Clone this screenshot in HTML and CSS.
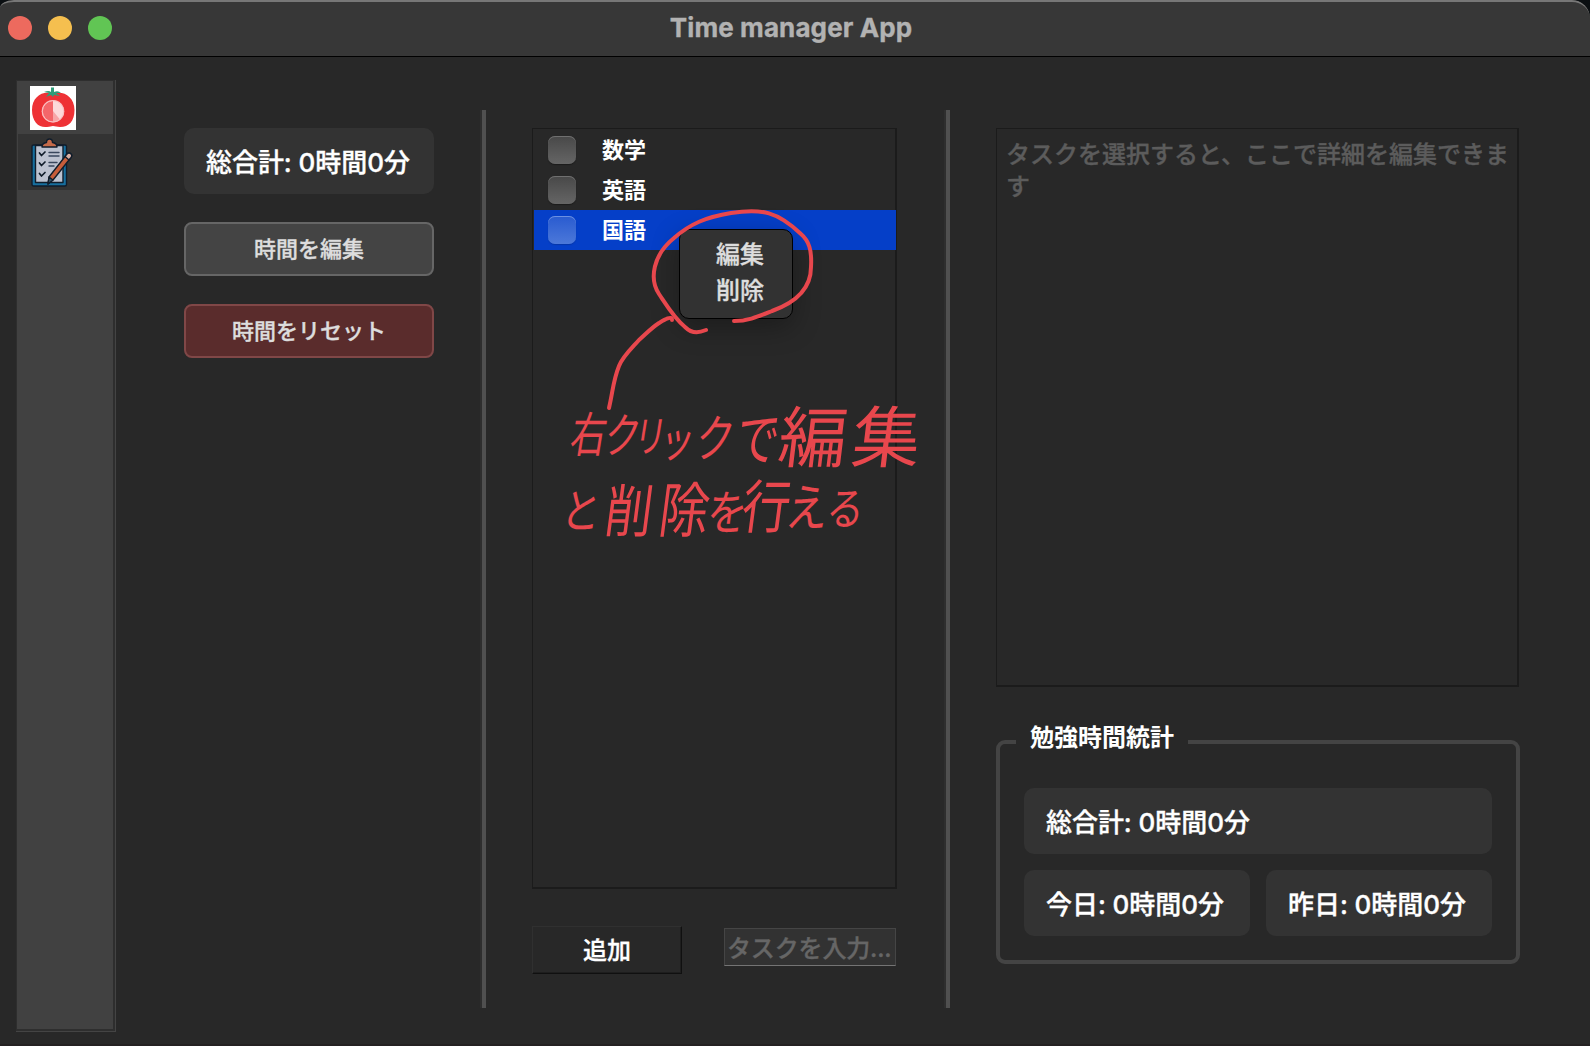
FILE: index.html
```html
<!DOCTYPE html>
<html lang="ja">
<head>
<meta charset="utf-8">
<title>Time manager App</title>
<link rel="stylesheet" href="styles.css">
</head>
<body>
<div class="window">
  <header class="titlebar">
    <div class="lights"><i class="light close"></i><i class="light minimize"></i><i class="light zoom"></i></div>
    <h1>Time manager App</h1>
  </header>
  <main class="content">
    <nav class="sidebar">
      <div class="tabs">
        <div class="tab">
          <svg class="tomato" width="46" height="44" viewBox="0 0 46 44">
            <rect width="46" height="44" fill="#fff"/>
            <path d="M23 8C14 4 2 10 2 24C2 36 9 42 17 41C20 41 21 40 23 40C25 40 27 41 30 41C39 41 44.500 35 44.500 24C44.500 10 32 4 23 8Z" fill="#ee3135"/>
            <path d="M14 6Q19 4 21 6V1.500H24V6Q28 4 31 7L26 7L30 10L24 9L23 11L21 9L16 11L19 7Z" fill="#2f9c78"/>
            <circle cx="23" cy="25.300" r="11.300" fill="#f8a5a7"/>
            <path d="M23 15A10.300 10.300 0 0 0 23 35.600Z" fill="#f4666a"/>
            <path d="M23 14.500A10.800 10.800 0 0 1 30 33.500L23 25Z" fill="#fcd9da"/>
            <circle cx="23" cy="25.300" r="10.700" fill="none" stroke="#fbc0c2" stroke-width="1"/>
          </svg>
        </div>
        <div class="tab tab-dark">
          <svg class="clipboard" width="42" height="50" viewBox="0 0 42 50">
            <g stroke="#111d2b" stroke-width="1.400" stroke-linejoin="round" stroke-linecap="round">
              <rect x="1" y="7" width="34.500" height="41" rx="1.500" fill="#176f9e"/>
              <path d="M4.500 7.500H32V44.500H4.500Z" fill="#bcc2d0"/>
              <path d="M11 9Q11 5 15.500 4.500Q15.500 1 18.500 1Q21.500 1 21.500 4.500Q26 5 26 9Z" fill="#c46a49"/>
              <path d="M8.500 15L10.500 17.500L14 14M8.500 25L10.500 27.500L14 24M8.500 35.500L10.500 38L14 34.500" fill="none" stroke-width="1.700"/>
              <path d="M18 14.500H28M18 18H28M18 24.500H26M18 28H23" fill="none" stroke="#39475d" stroke-width="1.400"/>
              <path d="M36 16Q38 14 40 16Q41.500 17.500 40 19.500L22 42L17 46L18 39Z" fill="#c65d3b"/>
              <path d="M36 16Q38 14 40 16Q41.500 17.500 40 19.500L38 22L34 18.500Z" fill="#dab0a4"/>
              <path d="M18 39L22 42L17 46Z" fill="#36556b"/>
            </g>
          </svg>
        </div>
      </div>
    </nav>

    <section class="timer">
      <div class="readout total">総合計: 0時間0分</div>
      <button class="btn">時間を編集</button>
      <button class="btn danger">時間をリセット</button>
    </section>

    <div class="splitter"></div>

    <section class="tasks">
      <ul class="list">
        <li><span class="check"></span>数学</li>
        <li><span class="check"></span>英語</li>
        <li class="selected"><span class="check"></span>国語</li>
      </ul>
      <div class="entry">
        <button class="add">追加</button>
        <div class="field">タスクを入力...</div>
      </div>
    </section>

    <div class="splitter"></div>

    <section class="details">
      <div class="editor">タスクを選択すると、ここで詳細を編集できます</div>
      <fieldset class="stats">
        <legend>勉強時間統計</legend>
        <div class="readout wide">総合計: 0時間0分</div>
        <div class="readout">今日: 0時間0分</div>
        <div class="readout">昨日: 0時間0分</div>
      </fieldset>
    </section>
  </main>

  <div class="menu"><div>編集</div><div>削除</div></div>

  <svg class="annotation" width="1590" height="1046" viewBox="0 0 1590 1046">
    <g class="pen">
      <path d="M734 321C748 321 757 317 772 311C797 302 811 288 811 267C812 250 809 241 801 234C778 212 762 208 731 213C706 217 690 224 674 238C653 255 649 279 659 294C667 306 674 318 685 327C693 335 701 332 706 330"/>
      <path d="M672 320C672 315 664 320 659 323C650 329 646 334 639 340C632 348 623 356 619 366C613 381 613 391 609 408"/>
    </g>
    <g class="note">
      <text transform="matrix(.74 0 -.16 1 0 453)" x="768 814 854 890 938 992" y="-1 0 -1 4 4 7"><tspan font-size="48">右</tspan><tspan font-size="48">ク</tspan><tspan font-size="43">リ</tspan><tspan font-size="46">ッ</tspan><tspan font-size="51">ク</tspan><tspan font-size="58">で</tspan></text>
      <text transform="matrix(1.02 0 -.12 1 0 462)" x="761 833" y="0 0" font-size="67">編集</text>
      <text transform="matrix(.83 0 -.13 1 0 529)" x="674 727 792 850 891 944 993" y="-1 3 3 1 -1 -3 -4"><tspan font-size="47">と</tspan><tspan font-size="57">削</tspan><tspan font-size="60">除</tspan><tspan font-size="48">を</tspan><tspan font-size="58">行</tspan><tspan font-size="51">え</tspan><tspan font-size="45">る</tspan></text>
    </g>
  </svg>
</div>
</body>
</html>
```
FILE: styles.css
```css
* { box-sizing: border-box; }

body {
  margin: 0;
  width: 1590px;
  height: 1046px;
  overflow: hidden;
  background: #0b0f12;
  color: #fff;
  font-family: Inter, "Noto Sans CJK JP", sans-serif;
  font-weight: 500;
  -webkit-text-stroke: .35px currentColor;
}

.window {
  position: relative;
  display: flex;
  flex-direction: column;
  height: 1046px;
  background: #282828;
  border-bottom: 2px solid #242122;
  border-radius: 14px 18px 0 0 / 8px 18px 0 0;
  overflow: hidden;
}

.titlebar {
  display: grid;
  grid-template-columns: 200px 1fr 208px;
  height: 57px;
  background: #373737;
  border-top: 2px solid #777;
  border-bottom: 1px solid #000;
  border-radius: 14px 18px 0 0 / 8px 18px 0 0;
}

.lights {
  display: flex;
  gap: 16px;
  padding: 14px 8px;
}

.light { width: 24px; height: 24px; border-radius: 50%; }
.close { background: #ed6a5e; }
.minimize { background: #f5bf4f; }
.zoom { background: #61c554; }

h1 {
  margin: 0;
  font-size: 26px;
  line-height: 51px;
  font-weight: 700;
  letter-spacing: .1px;
  text-align: center;
  color: #b2b2b2;
}

.content {
  display: flex;
  align-items: flex-start;
  flex: 1;
  padding: 23px 0 0 16px;
}

.sidebar {
  width: 100px;
  height: 952px;
  padding: 1px 2px 2px 1px;
  background: #2e2e2e;
  border-right: 1px solid #444;
  border-bottom: 1px solid #444;
}

.tabs { width: 96px; height: 948px; background: #414141; }
.tab { height: 53px; padding: 5px 0 0 13px; }
.tab-dark { height: 56px; margin-left: 1px; padding-top: 4px; background: #333; }
.tab svg { display: block; }

.timer {
  display: flex;
  flex-direction: column;
  gap: 28px;
  width: 250px;
  margin: 48px 46px 0 68px;
}

.readout {
  height: 66px;
  padding-left: 22px;
  border-radius: 10px;
  background: #333;
  font-size: 26px;
  line-height: 69px;
  letter-spacing: -.05px;
  white-space: nowrap;
}

button { font-family: inherit; font-weight: 500; padding: 0; -webkit-text-stroke: inherit; }

.btn {
  height: 54px;
  border: 2px solid #666;
  border-radius: 8px;
  background: #444;
  color: #ddd;
  font-size: 22px;
  line-height: 50px;
  -webkit-text-stroke: .35px #ddd;
}

.danger { border-color: #804747; background: #5a2c2c; }

.splitter {
  width: 6px;
  height: 898px;
  margin-top: 30px;
  background: #505050;
  border-left: 2px solid #2e2e2e;
}

.tasks { width: 365px; margin: 48px 47px 0 46px; }

.list {
  height: 761px;
  margin: 0;
  padding: 1px 0 0 1px;
  list-style: none;
  border: 1px solid #1b1b1b;
  border-right-width: 2px;
  border-bottom-width: 2px;
}

.list li {
  display: flex;
  align-items: center;
  gap: 26px;
  height: 40px;
  padding-left: 14px;
  font-size: 22px;
  font-weight: 700;
  line-height: 40px;
  -webkit-text-stroke: 0;
}

.list .selected { margin-right: -1px; background: #053fc8; }

.check {
  width: 28px;
  height: 28px;
  border-radius: 7px;
  background: linear-gradient(#484848, #656565);
  box-shadow: inset 0 1px #707070, 0 1px 1px #1b1b1b;
}

.selected .check {
  background: linear-gradient(#295bd0, #4c78d9);
  box-shadow: inset 0 1px #6c90e2, 0 1px 1px #0636a8;
}

.entry { display: flex; align-items: flex-start; gap: 42px; margin-top: 37px; }

.add {
  width: 150px;
  height: 48px;
  padding-bottom: 3px;
  border: 1px solid #303030;
  border-right-color: #101010;
  border-bottom-color: #101010;
  background: #282828;
  box-shadow: inset -1px -1px #1e1e1e;
  color: #fff;
  font-size: 24px;
}

.field {
  width: 172px;
  height: 38px;
  margin-top: 2px;
  padding-left: 2px;
  border: 1px solid #454545;
  border-bottom-color: #747474;
  background: #323232;
  color: #666;
  font-size: 24px;
  line-height: 40px;
  letter-spacing: -.15px;
  white-space: nowrap;
  -webkit-text-stroke: .35px #666;
}

.details { width: 524px; margin: 48px 0 0 46px; }

.editor {
  width: 523px;
  height: 559px;
  padding: 10px 5px 0 9px;
  border: 1px solid #1b1b1b;
  border-right-width: 2px;
  border-bottom-width: 2px;
  color: #5c5c5c;
  font-size: 24px;
  line-height: 32px;
  -webkit-text-stroke: .35px #5c5c5c;
}

.stats {
  display: grid;
  grid-template-columns: 1fr 1fr;
  grid-auto-rows: 66px;
  align-content: start;
  gap: 16px;
  height: 243px;
  min-width: 0;
  margin: 34px 0 0;
  padding: 25px 24px 0;
  border: 4px solid #444;
  border-radius: 9px;
}

legend {
  height: 42px;
  margin-left: -8px;
  padding: 0 14px;
  font-size: 24px;
  font-weight: 700;
  line-height: 33px;
  -webkit-text-stroke: 0;
}

.wide { grid-column: 1 / -1; }

.menu {
  position: absolute;
  left: 679px;
  top: 229px;
  width: 114px;
  height: 90px;
  padding: 7px 0 0 36px;
  border: 1px solid #000;
  border-radius: 10px;
  background: #323232;
  box-shadow: 0 8px 28px rgba(0, 0, 0, .3);
  color: #ddd;
  font-size: 24px;
  line-height: 36px;
  -webkit-text-stroke: .35px #ddd;
}

.annotation { position: absolute; left: 0; top: 0; }
.pen { fill: none; stroke: #e8474d; stroke-width: 4; stroke-linecap: round; stroke-linejoin: round; }
.note {
  fill: #e8474d;
  font-family: "Noto Sans CJK JP", sans-serif;
  font-weight: 400;
  -webkit-text-stroke: 0;
}
```
